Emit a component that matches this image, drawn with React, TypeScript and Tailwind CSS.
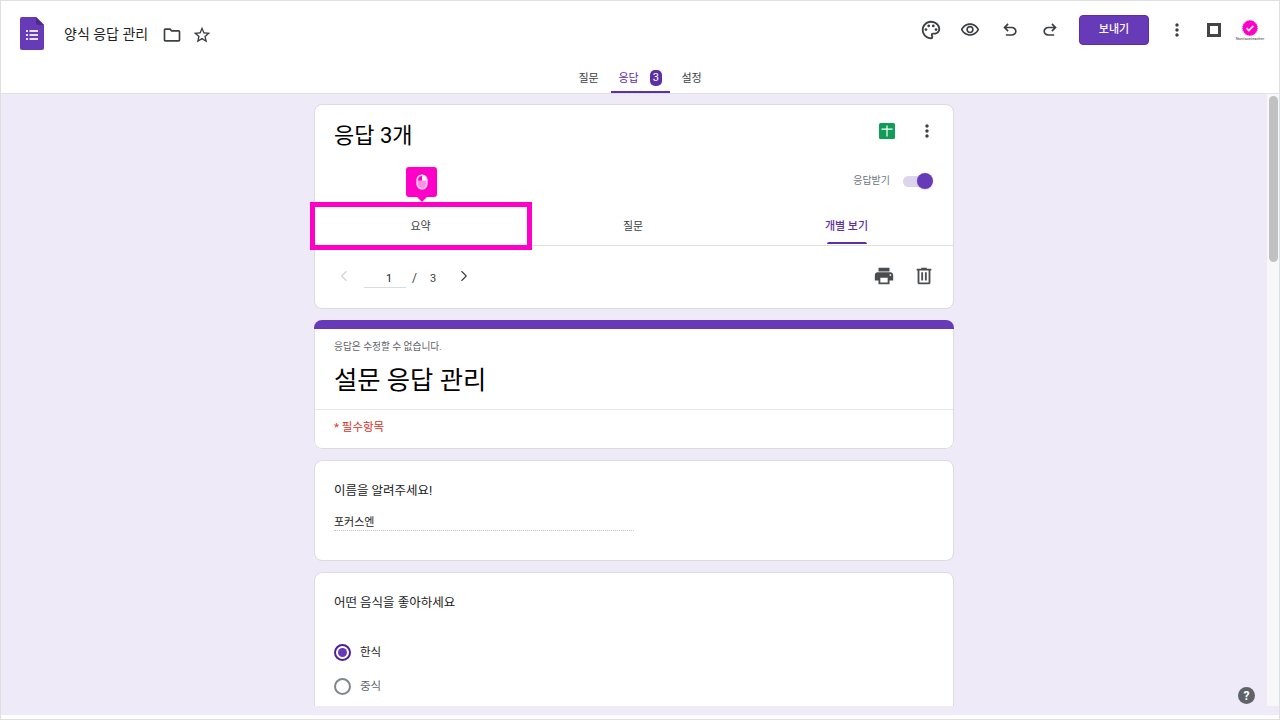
import { ChevronLeft, ChevronRight } from 'lucide-react';
import { MdMoreVert, MdOutlineFolder, MdPrint, MdStarBorder } from 'react-icons/md';

const FONT = "font-['Roboto','Noto_Sans_CJK_KR',sans-serif]";

function FormsLogo() {
  return (
    <svg width="24" height="33" viewBox="0 0 24 33">
      <path d="M2 0h14l8 8v23a2 2 0 0 1-2 2H2a2 2 0 0 1-2-2V2a2 2 0 0 1 2-2z" fill="#673ab7" />
      <path d="M16 0l8 8h-6a2 2 0 0 1-2-2z" fill="#4c2a8f" />
      <g fill="#e8e0f5">
        <rect x="6" y="13" width="2" height="2" />
        <rect x="9.5" y="13" width="8.5" height="2" />
        <rect x="6" y="17" width="2" height="2" />
        <rect x="9.5" y="17" width="8.5" height="2" />
        <rect x="6" y="21" width="2" height="2" />
        <rect x="9.5" y="21" width="8.5" height="2" />
      </g>
    </svg>
  );
}

function PaletteIcon() {
  return (
    <svg width="22" height="22" viewBox="0 0 24 24" fill="#3c4043">
      <path d="M12 22C6.49 22 2 17.51 2 12S6.49 2 12 2s10 4.04 10 9c0 3.31-2.69 6-6 6h-1.77c-.28 0-.5.22-.5.5 0 .12.05.23.13.33.41.47.64 1.06.64 1.67A2.5 2.5 0 0 1 12 22zm0-18c-4.41 0-8 3.59-8 8s3.59 8 8 8c.28 0 .5-.22.5-.5a.54.54 0 0 0-.14-.35c-.41-.46-.63-1.05-.63-1.65a2.5 2.5 0 0 1 2.5-2.5H16c2.21 0 4-1.79 4-4 0-3.86-3.59-7-8-7z" />
      <circle cx="6.5" cy="11.5" r="1.5" />
      <circle cx="9.5" cy="7.5" r="1.5" />
      <circle cx="14.5" cy="7.5" r="1.5" />
      <circle cx="17.5" cy="11.5" r="1.5" />
    </svg>
  );
}

function EyeIcon() {
  return (
    <svg width="20" height="20" viewBox="0 0 24 24" fill="#3c4043">
      <path d="M12 6c3.79 0 7.17 2.13 8.82 5.5C19.17 14.87 15.79 17 12 17s-7.17-2.13-8.82-5.5C4.83 8.13 8.21 6 12 6m0-2C7 4 2.73 7.11 1 11.5 2.73 15.89 7 19 12 19s9.27-3.11 11-7.5C21.27 7.11 17 4 12 4zm0 5c1.38 0 2.5 1.12 2.5 2.5S13.38 14 12 14s-2.5-1.12-2.5-2.5S10.62 9 12 9m0-2c-2.48 0-4.5 2.02-4.5 4.5S9.52 16 12 16s4.5-2.02 4.5-4.5S14.48 7 12 7z" />
    </svg>
  );
}

function UndoIcon() {
  return (
    <svg width="20" height="20" viewBox="0 -960 960 960" fill="#3c4043">
      <path d="M280-200v-80h284q63 0 109.5-40T720-420q0-60-46.5-100T564-560H312l104 104-56 56-200-200 200-200 56 56-104 104h252q97 0 166.5 63T800-420q0 94-69.5 157T564-200H280Z" />
    </svg>
  );
}

function RedoIcon() {
  return (
    <svg width="20" height="20" viewBox="0 -960 960 960" fill="#3c4043">
      <path d="M396-200q-97 0-166.5-63T160-420q0-94 69.5-157T396-640h252L544-744l56-56 200 200-200 200-56-56 104-104H396q-63 0-109.5 40T240-420q0 60 46.5 100T396-280h284v80H396Z" />
    </svg>
  );
}

function TrashIcon() {
  return (
    <svg width="22" height="22" viewBox="0 -960 960 960" fill="#4a4d50">
      <path d="M280-120q-33 0-56.5-23.5T200-200v-520h-40v-80h200v-40h240v40h200v80h-40v520q0 33-23.5 56.5T680-120H280Zm400-600H280v520h400v-520ZM360-280h80v-360h-80v360Zm160 0h80v-360h-80v360ZM280-720v520-520Z" />
    </svg>
  );
}

function BrandBadge() {
  return (
    <div className="flex w-[30px] flex-col items-center">
      <svg width="16" height="16" viewBox="0 0 16 16">
        <circle cx="8" cy="8" r="7.4" fill="#ff00c8" stroke="#ff00c8" strokeWidth="1" strokeDasharray="1 1" />
        <path d="M4.6 8.2l2.3 2.3 4.4-4.6" fill="none" stroke="#fff" strokeWidth="1.7" />
      </svg>
      <span className="mt-[1px] whitespace-nowrap text-[4px] leading-[4px] text-[#444]">Nonfaceteacher</span>
    </div>
  );
}

function SheetsIcon() {
  return (
    <svg width="16" height="16" viewBox="0 0 16 16">
      <rect width="16" height="16" rx="1.5" fill="#0f9d58" />
      <path d="M7.4 2.5h1.2v3h4.9v1.2H8.6v6.8H7.4V6.7H2.5V5.5h4.9z" fill="#fff" />
    </svg>
  );
}

function MouseTip() {
  return (
    <div className="absolute top-[62px] left-[91px] flex flex-col items-center">
      <div className="flex h-[30px] w-[31px] items-center justify-center rounded-[3px] bg-[#ff00c8]">
        <svg width="12" height="16" viewBox="0 0 12 16" fill="none">
          <rect x="1" y="1" width="10" height="14" rx="5" fill="#ff8fe4" stroke="#fff" strokeWidth="1.1" />
          <path d="M6 1.5a4.5 5 0 0 1 4.5 5H6z" fill="#fff" />
          <path d="M6 2a4 4.5 0 0 0-4 4.5h4z" fill="#ff00c8" />
        </svg>
      </div>
      <div className="h-0 w-0 border-x-[5px] border-t-[5px] border-x-transparent border-t-[#ff00c8]" />
    </div>
  );
}

function Header() {
  return (
    <header className="h-[93px] shrink-0 border-b border-[#e0dfe6] bg-white">
      <div className="flex h-[64px] items-start">
        <div className="mt-[16px] ml-[19px]">
          <FormsLogo />
        </div>
        <span className="mt-[21px] ml-5 text-[14px] leading-6 text-[#202124]">양식 응답 관리</span>
        <MdOutlineFolder className="mt-[24px] ml-[14px] text-[#3c4043]" size={20} />
        <MdStarBorder className="mt-[24px] ml-[10px] text-[#3c4043]" size={20} />
        <div className="mt-[14px] ml-auto flex items-center">
          <PaletteIcon />
          <div className="ml-[18px]"><EyeIcon /></div>
          <div className="ml-5"><UndoIcon /></div>
          <div className="ml-5"><RedoIcon /></div>
          <button className="ml-[19px] h-[30px] w-[70px] rounded-[4px] border border-[#5b2fa8] bg-[#673ab7] text-[11px] font-medium text-white">
            보내기
          </button>
          <MdMoreVert className="ml-[18px] text-[#3c4043]" size={20} />
          <div className="ml-[20px] h-[14px] w-[14px] border-[3px] border-[#444]" />
          <div className="mr-[14px] ml-[14px]"><BrandBadge /></div>
        </div>
      </div>
      <nav className="flex h-[28px] justify-center">
        <div className="flex items-start text-[11px] text-[#3c4043]">
          <span className="w-[22px] pt-[6px] text-center leading-4">질문</span>
          <div className="ml-[11px] flex h-[28px] w-[59px] items-start border-b-[2px] border-[#5b2fa8] pl-[8px] text-[#5b2fa8]">
            <span className="pt-[6px] leading-4">응답</span>
            <span className="mt-[5px] ml-[11px] flex h-[16px] w-[12px] items-center justify-center rounded-[5px] bg-[#5b2fa8] text-[11px] text-white">3</span>
          </div>
          <span className="ml-[11px] w-[22px] pt-[6px] text-center leading-4">설정</span>
        </div>
      </nav>
    </header>
  );
}

function ResponseCard() {
  return (
    <section className="relative h-[205px] rounded-lg border border-[#dadce0] bg-white">
      <div className="flex h-[62px] items-start justify-between pr-[16px] pl-[19px]">
        <h1 className="pt-[15px] text-[22px] leading-8 text-black">응답 3개</h1>
        <div className="flex items-center pt-[16px]">
          <SheetsIcon />
          <MdMoreVert className="ml-[22px] text-[#3c4043]" size={20} />
        </div>
      </div>
      <div className="flex h-[38px] items-start justify-end pr-[21px]">
        <span className="pt-[6px] text-[10px] leading-4 text-[#70757a]">응답받기</span>
        <div className="relative mt-[9px] ml-[13px] h-[11px] w-[29px] rounded-full bg-[#dcd3ec]">
          <div className="absolute top-[-3px] right-[-1px] h-[16px] w-[16px] rounded-full bg-[#673ab7] shadow" />
        </div>
      </div>
      <div className="flex h-[41px] border-b border-[#e0e0e0] text-[11px] leading-4">
        <div className="flex w-[211px] justify-center pt-[14px] text-[#3c4043]">요약</div>
        <div className="flex w-[214px] justify-center pt-[14px] text-[#3c4043]">질문</div>
        <div className="flex flex-1 flex-col items-center pt-[14px] font-medium text-[#5b2fa8]">
          <span>개별 보기</span>
          <div className="mt-[7px] h-[2px] w-[40px] rounded-t-sm bg-[#5b2fa8]" />
        </div>
      </div>
      <div className="flex items-center pt-[18px] pr-[18px] pl-[20px]">
        <ChevronLeft className="text-[#cfd0d2]" size={18} strokeWidth={1.5} />
        <div className="ml-[11px] h-6 w-[42px] border-b border-[#dadce0] pt-[7px] pl-2 text-center text-[11px] leading-4 text-[#202124]">1</div>
        <span className="mt-[4px] ml-[6px] text-[12px] text-[#3c4043]">/</span>
        <span className="mt-[7px] ml-[13px] text-[11px] text-[#3c4043]">3</span>
        <ChevronRight className="ml-[19px] text-[#3c4043]" size={18} strokeWidth={1.5} />
        <MdPrint className="ml-auto text-[#4a4d50]" size={22} />
        <div className="ml-[18px]"><TrashIcon /></div>
      </div>
      <div className="absolute top-[97px] left-[-5px] h-[48px] w-[222px] border-[5px] border-[#ff00c8]" />
      <MouseTip />
    </section>
  );
}

function TitleCard() {
  return (
    <section className="h-[129px] overflow-hidden rounded-lg bg-white">
      <div className="h-[9px] bg-[#673ab7]" />
      <div className="h-[120px] rounded-b-lg border-x border-b border-[#dadce0]">
        <div className="h-[81px] border-b border-[#e6e6e6] px-[19px]">
          <p className="pt-[10px] text-[9.7px] leading-4 text-[#5f6368]">응답은 수정할 수 없습니다.</p>
          <h2 className="pt-[8px] text-[25.3px] leading-9 text-black">설문 응답 관리</h2>
        </div>
        <p className="pt-[9px] pl-[19px] text-[11.5px] leading-4 text-[#d93025]">* 필수항목</p>
      </div>
    </section>
  );
}

function NameCard() {
  return (
    <section className="h-[101px] rounded-lg border border-[#dadce0] bg-white px-[19px]">
      <p className="pt-[20px] text-[12.5px] leading-5 text-[#202124]">이름을 알려주세요!</p>
      <div className="mt-[15px] w-[300px] border-b border-dotted border-[#c4c4c4] text-[11px] leading-[14px] text-[#202124]">포커스엔</div>
    </section>
  );
}

function FoodCard() {
  return (
    <section className="h-[240px] rounded-lg border border-[#dadce0] bg-white px-[19px]">
      <p className="pt-[20px] text-[12.5px] leading-5 text-[#202124]">어떤 음식을 좋아하세요</p>
      <div className="mt-[30px] flex h-[18px] items-center">
        <div className="flex h-[17px] w-[17px] items-center justify-center rounded-full border-2 border-[#4a2296]">
          <div className="h-[9px] w-[9px] rounded-full bg-[#673ab7]" />
        </div>
        <span className="ml-[9px] pt-[2px] text-[11.5px] text-[#202124]">한식</span>
      </div>
      <div className="mt-[16px] flex h-[18px] items-center">
        <div className="h-[17px] w-[17px] rounded-full border-2 border-[#80868b]" />
        <span className="ml-[9px] pt-[2px] text-[11.5px] text-[#5f6368]">중식</span>
      </div>
    </section>
  );
}

export default function App() {
  return (
    <div className={`${FONT} flex h-[720px] w-[1280px] flex-col overflow-hidden border-t border-r border-l border-[#dfdfdf] bg-white`}>
      <Header />
      <div className="relative flex h-[612px] shrink-0 bg-[#eeeaf8]">
        <main className="flex-1 overflow-hidden pt-[10px]">
          <div className="ml-[313px] flex w-[640px] flex-col gap-[11px]">
            <ResponseCard />
            <TitleCard />
            <NameCard />
            <FoodCard />
          </div>
        </main>
        <div className="w-[12px] bg-[#f8f8f8] pt-[2px]">
          <div className="mx-auto h-[166px] w-[9px] rounded-full bg-[#c1c1c1]" />
        </div>
        <button className="absolute right-[24px] bottom-[2px] flex h-[17px] w-[17px] items-center justify-center rounded-full bg-[#5f6368] text-[12px] font-bold text-white">?</button>
      </div>
      <div className="h-[9px] shrink-0 bg-[#eeeaf8]" />
      <div className="flex-1 border-b border-[#dfdfdf] bg-white" />
    </div>
  );
}
